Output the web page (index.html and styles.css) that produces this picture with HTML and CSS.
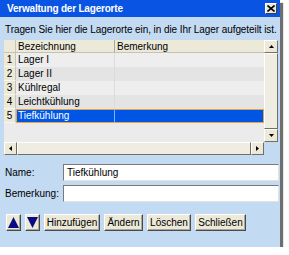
FILE: index.html
```html
<!DOCTYPE html>
<html>
<head>
<meta charset="utf-8">
<link rel="stylesheet" href="styles.css">
</head>
<body>
<div class="window">
  <div class="titlebar">
    <span class="title">Verwaltung der Lagerorte</span>
    <span class="close"><svg width="8" height="7" viewBox="0 0 8 7"><path d="M0.5 0.5 L7.5 6.5 M7.5 0.5 L0.5 6.5" stroke="#000" stroke-width="1.6"/></svg></span>
  </div>
  <p class="intro">Tragen Sie hier die Lagerorte ein, in die Ihr Lager aufgeteilt ist.</p>
  <div class="pane">
    <div class="viewport">
      <div class="row head"><div class="num"></div><div class="cells"><div class="c1">Bezeichnung</div><div class="c2">Bemerkung</div></div></div>
      <div class="row odd"><div class="num">1</div><div class="cells"><div class="c1">Lager I</div><div class="c2"></div></div></div>
      <div class="row even"><div class="num">2</div><div class="cells"><div class="c1">Lager II</div><div class="c2"></div></div></div>
      <div class="row odd"><div class="num">3</div><div class="cells"><div class="c1">Kühlregal</div><div class="c2"></div></div></div>
      <div class="row even"><div class="num">4</div><div class="cells"><div class="c1">Leichtkühlung</div><div class="c2"></div></div></div>
      <div class="row sel"><div class="num">5</div><div class="cells"><div class="c1">Tiefkühlung</div><div class="c2"></div></div></div>
    </div>
    <div class="vscroll">
      <div class="sbtn"><svg width="5" height="3" viewBox="0 0 5 3"><path d="M2.5 0 L5 3 L0 3 Z" fill="#000"/></svg></div>
      <div class="thumb"></div>
      <div class="sbtn"><svg width="5" height="3" viewBox="0 0 5 3"><path d="M0 0 L5 0 L2.5 3 Z" fill="#000"/></svg></div>
    </div>
    <div class="hscroll">
      <div class="sbtn hb"><svg width="3" height="5" viewBox="0 0 3 5"><path d="M3 0 L3 5 L0 2.5 Z" fill="#000"/></svg></div>
      <div class="thumb"></div>
      <div class="sbtn hb"><svg width="3" height="5" viewBox="0 0 3 5"><path d="M0 0 L3 2.5 L0 5 Z" fill="#000"/></svg></div>
    </div>
    <div class="corner"></div>
  </div>
  <div class="form">
    <div class="field-row"><span class="label">Name:</span><div class="input">Tiefkühlung</div></div>
    <div class="field-row"><span class="label">Bemerkung:</span><div class="input"></div></div>
  </div>
  <div class="btn-row">
    <div class="btn arrow"><svg width="11" height="11" viewBox="0 0 11 11"><path d="M5.5 0 L11 11 L0 11 Z" fill="#0a0a82"/></svg></div>
    <div class="btn arrow"><svg width="11" height="11" viewBox="0 0 11 11"><path d="M0 0 L11 0 L5.5 11 Z" fill="#0a0a82"/></svg></div>
    <div class="btn w-add">Hinzufügen</div>
    <div class="btn w-edit">Ändern</div>
    <div class="btn w-del">Löschen</div>
    <div class="btn w-close">Schließen</div>
  </div>
</div>
</body>
</html>
```

FILE: styles.css
```css
body {
  margin: 0;
  background: #ffffff;
  font-family: "Liberation Sans", Arial, sans-serif;
  font-size: 10px;
  color: #000;
}

.window {
  width: 280px;
  height: 247px;
  background: #c3daf3;
  box-shadow: 3px 3px 1px #6e6e6e;
  display: flex;
  flex-direction: column;
}

.titlebar {
  height: 17px;
  flex: none;
  background: #0a54e3;
  color: #fff;
  font-weight: bold;
  letter-spacing: -0.2px;
  display: flex;
  align-items: center;
  justify-content: space-between;
  padding: 0 3px 0 7px;
}

.close {
  width: 12px;
  height: 11px;
  box-sizing: border-box;
  background: #ece9d8;
  border: 1px solid;
  border-color: #ffffff #404040 #404040 #ffffff;
  display: flex;
  align-items: center;
  justify-content: center;
}

.intro {
  margin: 7px 0 4px 5px;
  line-height: 12px;
  white-space: nowrap;
  letter-spacing: -0.08px;
}

.pane {
  margin-left: 4px;
  display: grid;
  grid-template-columns: 260px 14px;
  grid-template-rows: 102px 13px;
}

.viewport {
  background: #ebebeb;
  overflow: hidden;
}

.row {
  display: flex;
  height: 14px;
  line-height: 14px;
}

.row.head {
  height: 13px;
  line-height: 13px;
  background: #ece9d8;
  box-sizing: border-box;
  border-bottom: 1px solid #c7c3b2;
}

.num {
  width: 12px;
  flex: none;
  box-sizing: border-box;
  background: #ece9d8;
  border-right: 1px solid #c9c5b6;
  border-bottom: 1px solid #f7f6f0;
  text-align: center;
}

.head .num {
  border-bottom: none;
}

.cells {
  flex: 1;
  display: flex;
}

.c1 {
  width: 99px;
  flex: none;
  box-sizing: border-box;
  padding-left: 2px;
  border-right: 1px solid #dcdcdc;
  white-space: nowrap;
}

.c2 {
  flex: 1;
  padding-left: 2px;
}

.head .c1 {
  border-right-color: #aca899;
}

.odd .cells {
  background: #eeeeee;
}

.even .cells {
  background: #e4e4e4;
}

.sel .cells {
  background: #0055e5;
  color: #ffffff;
  box-shadow: inset 0 0 0 1px #e3a446;
}

.sel .c1 {
  border-right-color: #8fb0ee;
}

.vscroll {
  display: flex;
  flex-direction: column;
}

.hscroll {
  display: flex;
}

.sbtn {
  width: 14px;
  height: 13px;
  flex: none;
}

.sbtn.hb {
  width: 13px;
}

.sbtn,
.thumb {
  box-sizing: border-box;
  background: #ece9d8;
  border: 1px solid;
  border-color: #ffffff #716f64 #716f64 #ffffff;
  display: flex;
  align-items: center;
  justify-content: center;
}

.thumb {
  flex: 1;
  background: #efedE2;
}

.form {
  margin: 9px 0 0 5px;
  display: flex;
  flex-direction: column;
  gap: 4px;
}

.field-row {
  display: flex;
  align-items: center;
}

.label {
  width: 58px;
  flex: none;
}

.input {
  width: 216px;
  height: 17px;
  box-sizing: border-box;
  background: #ffffff;
  border: 1px solid;
  border-color: #7a7a7a #e4e2da #e4e2da #7a7a7a;
  padding-left: 3px;
  line-height: 15px;
}

.btn-row {
  display: flex;
  gap: 4px;
  margin: 12px 0 0 6px;
}

.btn {
  height: 17px;
  box-sizing: border-box;
  background: #ece9d8;
  border: 1px solid;
  border-color: #ffffff #4a4a4a #4a4a4a #ffffff;
  box-shadow: inset -1px -1px 0 #aca899;
  display: flex;
  align-items: center;
  justify-content: center;
  line-height: 15px;
}

.arrow {
  width: 15px;
}

.w-add { width: 56px; }
.w-edit { width: 39px; }
.w-del { width: 44px; }
.w-close { width: 51px; }
```
